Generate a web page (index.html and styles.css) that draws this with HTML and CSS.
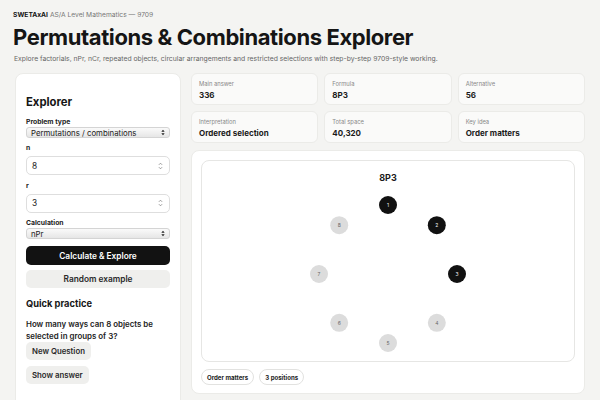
FILE: index.html
```html
<!DOCTYPE html>
<html lang="en">
<head>
<meta charset="utf-8">
<title>Permutations &amp; Combinations Explorer</title>
<link rel="stylesheet" href="styles.css">
</head>
<body>
<header class="top">
  <p class="brand"><b>SWETAxAI</b> AS/A Level Mathematics — 9709</p>
  <h1 class="title">Permutations &amp; Combinations Explorer</h1>
  <p class="lede">Explore factorials, nPr, nCr, repeated objects, circular arrangements and restricted selections with step-by-step 9709-style working.</p>
</header>

<main class="layout">
  <aside class="panel controls">
    <h2 class="panel-title">Explorer</h2>

    <label class="field-label">Problem type</label>
    <div class="select">
      <span>Permutations / combinations</span>
      <svg class="caret" viewBox="0 0 6 10" width="5" height="8"><path d="M3 1 L5.5 4 H0.5 Z M3 9 L0.5 6 H5.5 Z" fill="#222"/></svg>
    </div>

    <label class="field-label">n</label>
    <div class="input">
      <span>8</span>
      <svg class="spin" viewBox="0 0 6 10" width="5" height="8"><path d="M1 3.5 L3 1.5 L5 3.5 M1 6.5 L3 8.5 L5 6.5" fill="none" stroke="#777" stroke-width="0.9"/></svg>
    </div>

    <label class="field-label">r</label>
    <div class="input">
      <span>3</span>
      <svg class="spin" viewBox="0 0 6 10" width="5" height="8"><path d="M1 3.5 L3 1.5 L5 3.5 M1 6.5 L3 8.5 L5 6.5" fill="none" stroke="#777" stroke-width="0.9"/></svg>
    </div>

    <label class="field-label">Calculation</label>
    <div class="select">
      <span>nPr</span>
      <svg class="caret" viewBox="0 0 6 10" width="5" height="8"><path d="M3 1 L5.5 4 H0.5 Z M3 9 L0.5 6 H5.5 Z" fill="#222"/></svg>
    </div>

    <button class="btn btn-primary">Calculate &amp; Explore</button>
    <button class="btn btn-soft">Random example</button>

    <h3 class="sub-title">Quick practice</h3>
    <p class="question">How many ways can 8 objects be selected in groups of 3?</p>
    <button class="btn-small">New Question</button>
    <button class="btn-small">Show answer</button>
  </aside>

  <section class="results">
    <div class="stats">
      <div class="stat"><span class="stat-label">Main answer</span><span class="stat-value">336</span></div>
      <div class="stat"><span class="stat-label">Formula</span><span class="stat-value">8P3</span></div>
      <div class="stat"><span class="stat-label">Alternative</span><span class="stat-value">56</span></div>
      <div class="stat"><span class="stat-label">Interpretation</span><span class="stat-value">Ordered selection</span></div>
      <div class="stat"><span class="stat-label">Total space</span><span class="stat-value">40,320</span></div>
      <div class="stat"><span class="stat-label">Key idea</span><span class="stat-value">Order matters</span></div>
    </div>

    <div class="panel visual">
      <div class="diagram">
        <svg viewBox="0 0 374 202" width="374" height="202">
          <text x="187" y="21" class="d-title" text-anchor="middle">8P3</text>
          <g class="node on"><circle cx="187" cy="45" r="9"/><text x="187" y="47">1</text></g>
          <g class="node on"><circle cx="235.8" cy="65.2" r="9"/><text x="235.8" y="67.2">2</text></g>
          <g class="node on"><circle cx="256" cy="114" r="9"/><text x="256" y="116">3</text></g>
          <g class="node"><circle cx="235.8" cy="162.8" r="9"/><text x="235.8" y="164.8">4</text></g>
          <g class="node"><circle cx="187" cy="183" r="9"/><text x="187" y="185">5</text></g>
          <g class="node"><circle cx="138.2" cy="162.8" r="9"/><text x="138.2" y="164.8">6</text></g>
          <g class="node"><circle cx="118" cy="114" r="9"/><text x="118" y="116">7</text></g>
          <g class="node"><circle cx="138.2" cy="65.2" r="9"/><text x="138.2" y="67.2">8</text></g>
        </svg>
      </div>
      <div class="chips">
        <span class="chip">Order matters</span>
        <span class="chip">3 positions</span>
      </div>
    </div>
  </section>
</main>
</body>
</html>
```

FILE: styles.css
```css
* { box-sizing: border-box; }

html, body {
  margin: 0;
  padding: 0;
  background: #f4f4f2;
  color: #161616;
  font-family: Inter, "Noto Sans", "Liberation Sans", sans-serif;
  height: 400px;
  overflow: hidden;
}

body { padding: 0 15px; }

.top { padding-top: 10px; }

.brand {
  margin: 0 0 0 -2px;
  font-size: 6.7px;
  line-height: 10px;
  color: #777;
}
.brand b { color: #111; font-weight: 700; }

.title {
  margin: 4px 0 0 -2px;
  font-size: 22px;
  line-height: 26px;
  font-weight: 700;
  letter-spacing: -0.4px;
  color: #151515;
}

.lede {
  margin: 4px 0 0 -1px;
  font-size: 6.8px;
  line-height: 10px;
  color: #666;
}

.layout {
  margin-top: 9px;
  display: grid;
  grid-template-columns: 166px 394px;
  gap: 10px;
  align-items: start;
}

.panel {
  background: #fff;
  border: 1px solid #ebebe8;
  border-radius: 8px;
}

.controls {
  padding: 20px 10px 40px;
  display: flex;
  flex-direction: column;
  align-items: flex-start;
}

.panel-title {
  margin: 0 0 7px;
  font-size: 11.3px;
  line-height: 16px;
  font-weight: 700;
}

.field-label {
  font-size: 6.8px;
  font-weight: 700;
  line-height: 9px;
  color: #222;
  margin-bottom: 1px;
}

.select {
  width: 100%;
  height: 11px;
  margin-bottom: 5px;
  padding: 0 4px;
  display: flex;
  align-items: center;
  justify-content: space-between;
  font-size: 7.8px;
  color: #222;
  border: 1px solid #d4d4d4;
  border-radius: 3px;
  background: linear-gradient(#fafafa, #e6e6e6);
}
.select .caret { width: 4px; height: 7px; }

.input {
  width: 100%;
  height: 19px;
  margin: 3px 0 5.5px;
  padding: 0 6px 0 5px;
  display: flex;
  align-items: center;
  justify-content: space-between;
  font-size: 8.3px;
  color: #222;
  border: 1px solid #dedede;
  border-radius: 5px;
  background: #fff;
}

.btn {
  width: 100%;
  height: 19px;
  border: 0;
  border-radius: 5px;
  font-family: inherit;
  font-size: 8.3px;
  font-weight: 600;
  padding: 0;
}
.btn-primary {
  margin-top: 2px;
  background: #121212;
  color: #fff;
}
.btn-soft {
  height: 18px;
  margin-top: 5px;
  background: #efefed;
  color: #2a2a2a;
}

.sub-title {
  margin: 9px 0 0;
  font-size: 9.3px;
  line-height: 14px;
  font-weight: 700;
}

.question {
  margin: 7px 0 0;
  font-size: 7.9px;
  line-height: 12px;
  font-weight: 600;
  color: #222;
}

.btn-small {
  margin-top: 0;
  height: 18px;
  padding: 0 6px;
  border: 0;
  border-radius: 5px;
  background: #efefed;
  color: #2a2a2a;
  font-family: inherit;
  font-size: 7.8px;
  font-weight: 600;
}
.btn-small + .btn-small { margin-top: 6px; }

.results {
  display: flex;
  flex-direction: column;
  gap: 7px;
}

.stats {
  display: grid;
  grid-template-columns: repeat(3, 1fr);
  gap: 6px;
}

.stat {
  height: 32px;
  padding: 6px 7px;
  display: flex;
  flex-direction: column;
  gap: 2px;
  background: #fafaf9;
  border: 1px solid #ebebe8;
  border-radius: 6px;
}
.stat-label { font-size: 5.8px; line-height: 8px; color: #888; }
.stat-value { font-size: 8px; line-height: 11px; font-weight: 700; color: #1a1a1a; }

.visual {
  padding: 9px 9px 10px;
  height: 244px;
}

.diagram {
  height: 202px;
  border: 1px solid #e6e6e4;
  border-radius: 8px;
  overflow: hidden;
}
.diagram svg { display: block; margin: -1px; }

.d-title {
  font-size: 9px;
  font-weight: 700;
  fill: #1a1a1a;
}

.node circle { fill: #dcdcdc; }
.node text {
  font-size: 5px;
  fill: #666;
  text-anchor: middle;
}
.node.on circle { fill: #111; }
.node.on text { fill: #eee; }

.chips {
  margin-top: 7px;
  display: flex;
  gap: 5px;
}

.chip {
  height: 16px;
  padding: 0 5px;
  display: inline-flex;
  align-items: center;
  border: 1px solid #e2e2e0;
  border-radius: 999px;
  font-size: 6.1px;
  font-weight: 700;
  color: #222;
  background: #fff;
}
```
